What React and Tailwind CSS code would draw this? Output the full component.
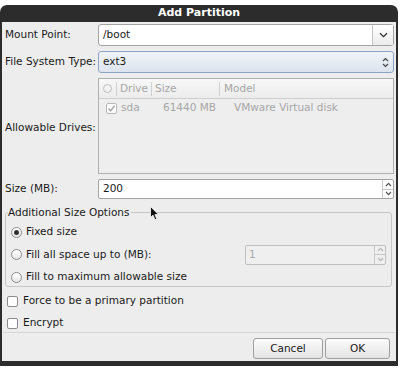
import React from "react";

function Radio({ checked }) {
  return (
    <span className="flex h-[11px] w-[11px] items-center justify-center rounded-full border border-[#8c8c8c] bg-gradient-to-b from-white to-[#e6e6e6]">
      {checked && <span className="h-[5px] w-[5px] rounded-full bg-[#333]" />}
    </span>
  );
}

function Check({ checked, disabled }) {
  return (
    <span
      className={
        "flex h-[11px] w-[11px] items-center justify-center rounded-[2px] border bg-white " +
        (disabled ? "border-[#b8b8b8]" : "border-[#8c8c8c]")
      }
    >
      {checked && (
        <svg width="9" height="9" viewBox="0 0 9 9">
          <path d="M1.5 4.5 L3.6 6.8 L7.6 1.8" fill="none" stroke={disabled ? "#a8a8a8" : "#333"} strokeWidth="1.4" />
        </svg>
      )}
    </span>
  );
}

function SpinArrows({ disabled }) {
  const c = disabled ? "#b5b5b5" : "#555";
  return (
    <div className="flex w-[11px] flex-col self-stretch border-l border-[#c8c8c8]">
      <div className="flex flex-1 items-center justify-center border-b border-[#c8c8c8]">
        <svg width="7" height="5" viewBox="0 0 7 5">
          <path d="M1 4 L3.5 1.3 L6 4" fill="none" stroke={c} strokeWidth="1.2" />
        </svg>
      </div>
      <div className="flex flex-1 items-center justify-center">
        <svg width="7" height="5" viewBox="0 0 7 5">
          <path d="M1 1 L3.5 3.7 L6 1" fill="none" stroke={c} strokeWidth="1.2" />
        </svg>
      </div>
    </div>
  );
}

export default function App() {
  return (
    <div className="relative h-[369px] w-[402px] overflow-hidden bg-white font-['DejaVu_Sans',sans-serif] text-[10.5px] text-[#1a1a1a]">
      <div className="mt-[5px] flex h-[361px] w-[398px] flex-col rounded-t-[7px] bg-[#2c2c2c] px-[2px] pb-[5px]">
        <div className="flex h-[17px] items-center justify-center text-[11px] font-bold text-white">
          Add Partition
        </div>
        <div className="flex flex-1 flex-col bg-[#ededed] px-[1px] pt-[2px]">
          {/* Mount point */}
          <div className="flex h-[22px] items-center">
            <span className="w-[95px] pl-[2px]">Mount Point:</span>
            <div className="flex h-full w-[296px] items-stretch rounded-[3px] border border-[#a3a3a3] bg-white">
              <div className="flex flex-1 items-center pl-[4px]">/boot</div>
              <div className="flex w-[21px] items-center justify-center border-l border-[#c4c4c4] bg-gradient-to-b from-white to-[#ececec]">
                <svg width="9" height="6" viewBox="0 0 9 6">
                  <path d="M1 1.2 L4.5 4.6 L8 1.2" fill="none" stroke="#333" strokeWidth="1.3" />
                </svg>
              </div>
            </div>
          </div>

          {/* File system type */}
          <div className="mt-[5px] flex h-[22px] items-center">
            <span className="w-[95px] pl-[2px]">File System Type:</span>
            <div className="flex h-full w-[296px] items-center rounded-[3px] border border-[#8ea4c4] bg-gradient-to-b from-[#f1f4f8] to-[#dde4ee] pl-[4px] pr-[4px]">
              <span className="flex-1">ext3</span>
              <svg width="7" height="11" viewBox="0 0 7 11">
                <path d="M1 4 L3.5 1.5 L6 4 M1 7 L3.5 9.5 L6 7" fill="none" stroke="#444" strokeWidth="1.2" />
              </svg>
            </div>
          </div>

          {/* Allowable drives */}
          <div className="mt-[5px] flex h-[96px] items-center">
            <span className="w-[95px] pl-[2px] pt-[4px]">Allowable Drives:</span>
            <div className="flex h-full w-[296px] flex-col border border-[#b0b0b0] bg-[#eeeeee] text-[#a6a6a6]">
              <div className="flex h-[20px] items-center border-b border-[#cfcfcf] bg-gradient-to-b from-[#f8f8f8] to-[#ececec]">
                <span className="flex w-[17px] justify-center">
                  <span className="h-[9px] w-[9px] rounded-full border border-[#bdbdbd]" />
                </span>
                <span className="h-[14px] border-l border-[#d0d0d0]" />
                <span className="w-[34px] pl-[3px]">Drive</span>
                <span className="h-[14px] border-l border-[#d0d0d0]" />
                <span className="w-[67px] pl-[3px]">Size</span>
                <span className="h-[14px] border-l border-[#d0d0d0]" />
                <span className="pl-[4px]">Model</span>
              </div>
              <div className="flex h-[18px] items-center">
                <span className="flex w-[21px] justify-center pl-[3px]">
                  <Check checked disabled />
                </span>
                <span className="w-[43px] pl-[1px]">sda</span>
                <span className="w-[71px]">61440 MB</span>
                <span>VMware Virtual disk</span>
              </div>
            </div>
          </div>

          {/* Size */}
          <div className="mt-[5px] flex h-[20px] items-center">
            <span className="w-[95px] pl-[2px]">Size (MB):</span>
            <div className="flex h-full w-[296px] items-center rounded-[2px] border border-[#a3a3a3] bg-white pl-[4px]">
              <span className="flex-1">200</span>
              <SpinArrows />
            </div>
          </div>

          {/* Additional size options */}
          <div className="relative mx-[2px] mt-[13px] h-[75px] w-[387px] rounded-[3px] border border-[#c6c6c6] px-[5px] pt-[8px]">
            <span className="absolute left-[2px] top-[-8px] bg-[#ededed] pr-[2px]">Additional Size Options</span>
            <div className="flex h-[22px] items-center gap-[4px]">
              <Radio checked />
              <span>Fixed size</span>
            </div>
            <div className="flex h-[23px] items-center gap-[4px]">
              <Radio />
              <span className="flex-1">Fill all space up to (MB):</span>
              <div className="flex h-[20px] w-[141px] items-center rounded-[2px] border border-[#c0c0c0] bg-[#efefef] pl-[3px] text-[#a8a8a8]">
                <span className="flex-1">1</span>
                <SpinArrows disabled />
              </div>
            </div>
            <div className="flex h-[22px] items-center gap-[4px]">
              <Radio />
              <span>Fill to maximum allowable size</span>
            </div>
          </div>

          {/* Checkboxes */}
          <div className="mt-[4px] flex h-[20px] items-center gap-[5px] pl-[4px]">
            <Check />
            <span>Force to be a primary partition</span>
          </div>
          <div className="mt-[3px] flex h-[18px] items-center gap-[5px] pl-[4px]">
            <Check />
            <span>Encrypt</span>
          </div>

          <div className="border-t border-[#d6d6d6]" />

          <div className="mt-[5px] flex justify-end gap-[2px] pr-[5px]">
            <button className="h-[21px] w-[70px] rounded-[3px] border border-[#9f9f9f] bg-gradient-to-b from-[#fbfbfb] to-[#e4e4e4] text-[10.5px]">
              Cancel
            </button>
            <button className="h-[21px] w-[65px] rounded-[3px] border border-[#9f9f9f] bg-gradient-to-b from-[#fbfbfb] to-[#e4e4e4] text-[10.5px]">
              OK
            </button>
          </div>
        </div>
      </div>

      {/* mouse pointer */}
      <svg className="absolute left-[150px] top-[206px]" width="10" height="15" viewBox="0 0 10 15">
        <path d="M0.5 0.5 L0.5 11.5 L3 9.2 L5 13.8 L6.8 13 L4.9 8.6 L8.5 8.6 Z" fill="#111" stroke="#fff" strokeWidth="0.8" />
      </svg>
    </div>
  );
}
